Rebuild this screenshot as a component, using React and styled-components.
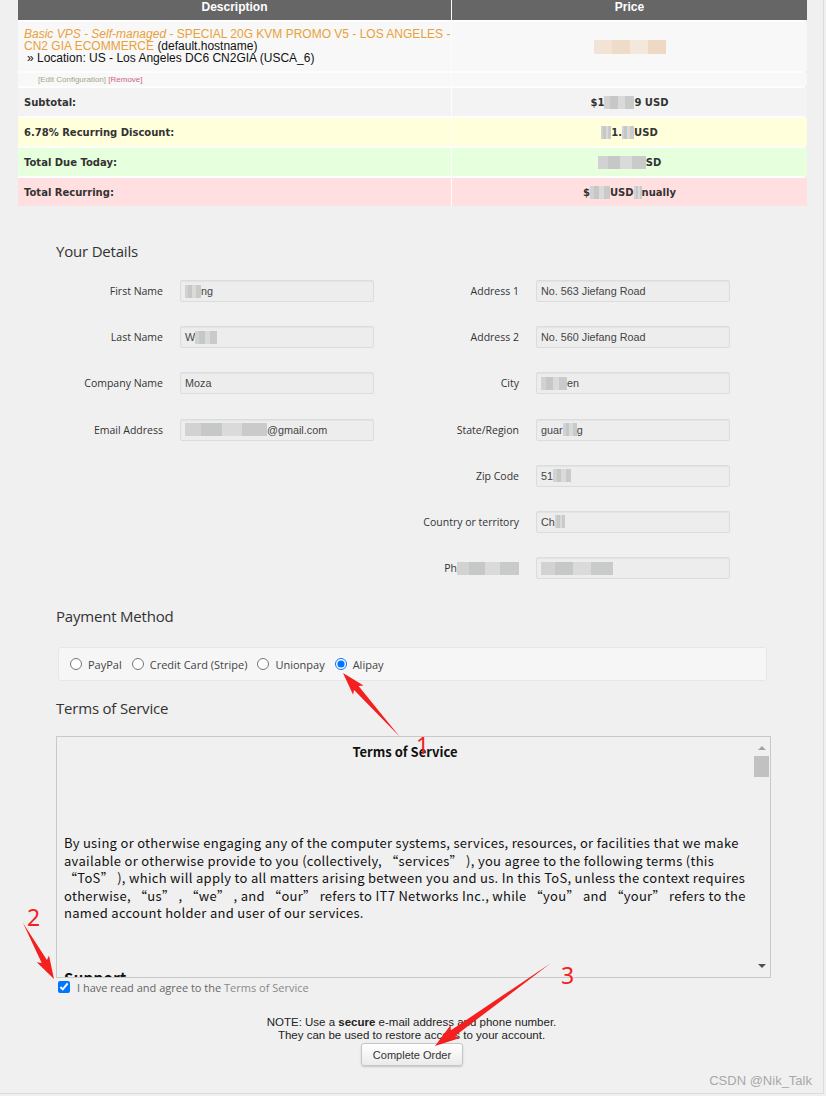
import React from "react";
import styled, { createGlobalStyle } from "styled-components";

const GlobalStyle = createGlobalStyle`
  html, body {
    margin: 0;
    padding: 0;
    background: #f0f0f0;
  }
`;

const Page = styled.div`
  position: relative;
  width: 823px;
  height: 1093px;
  border-right: 1px solid #dcdcdc;
  border-bottom: 1px solid #dcdcdc;
  font-family: "Liberation Sans", Arial, sans-serif;
  color: #333;
`;

/* ---------- cart table ---------- */

const Cart = styled.div`
  margin: 0 18px;
  display: grid;
  grid-template-columns: 433px 355px;
  column-gap: 1px;
  row-gap: 2px;
  background: #fdfdfd;
`;

const HeadCell = styled.div`
  height: 20px;
  background: #666;
  color: #fff;
  font-weight: bold;
  font-size: 12px;
  line-height: 14px;
  text-align: center;
`;

const tones = {
  plain: "#f8f8f8",
  sub: "#f3f3f3",
  yellow: "#ffffdc",
  green: "#e6ffdc",
  pink: "#ffdfdf",
};

const Cell = styled.div`
  background: ${(p) => tones[p.$tone || "plain"]};
  height: ${(p) => p.$h || 28}px;
  display: flex;
  align-items: center;
  justify-content: ${(p) => (p.$center ? "center" : "flex-start")};
  padding: 0 6px;
  box-sizing: border-box;
  font-family: "DejaVu Sans", Verdana, sans-serif;
  font-weight: bold;
  font-size: 10px;
  color: #333;
`;

const ProductCell = styled.div`
  background: #f8f8f8;
  height: 49px;
  padding: 6px 0 0 6px;
  box-sizing: border-box;
  font-size: 12px;
  line-height: 12px;
  color: #111;
`;

const Product = styled.span`
  color: #e8a13a;
`;

const Location = styled.div`
  padding-left: 3px;
`;

const EditCell = styled.div`
  background: #f8f8f8;
  height: 13px;
  padding-left: 20px;
  font-size: 8px;
  line-height: 13px;
  color: #a5a58a;
`;

const RemoveLink = styled.span`
  color: #d0677a;
`;

const Mask = styled.span`
  display: inline-block;
  width: ${(p) => p.$w}px;
  height: ${(p) => p.$h || 13}px;
  vertical-align: middle;
  background: ${(p) =>
    p.$peach
      ? "linear-gradient(90deg, #f1e4d6 0 25%, #efdcc8 25% 50%, #f4e8dc 50% 75%, #eedac4 75%)"
      : "linear-gradient(90deg, #d2d2d2 0 20%, #c6c8c8 20% 45%, #dadada 45% 70%, #c9cbcb 70%)"};
`;

/* ---------- sections ---------- */

const Main = styled.div`
  margin-left: 56px;
  width: 715px;
`;

const SectionTitle = styled.h2`
  margin: ${(p) => p.$top}px 0 0;
  font-family: "Open Sans", sans-serif;
  font-weight: normal;
  font-size: 15px;
  line-height: 20px;
  color: #333;
  letter-spacing: -0.2px;
`;

const FormGrid = styled.div`
  margin-top: 19px;
  display: flex;
  gap: 38px;
  align-items: flex-start;
`;

const FormCol = styled.div`
  display: flex;
  flex-direction: column;
  gap: 24.2px;
`;

const FormRow = styled.div`
  display: flex;
  align-items: center;
  gap: 17px;
`;

const Label = styled.div`
  width: 107px;
  text-align: right;
  font-family: "Open Sans", sans-serif;
  font-size: 10.5px;
  color: #333;
  white-space: nowrap;
`;

const Field = styled.div`
  width: 194px;
  height: 22px;
  box-sizing: border-box;
  border: 1px solid #dcdcdc;
  border-radius: 2px;
  background: #ededed;
  box-shadow: inset 0 1px 1px rgba(0, 0, 0, 0.04);
  padding: 0 4px;
  display: flex;
  align-items: center;
  font-size: 10.8px;
  color: #444;
  white-space: nowrap;
  overflow: hidden;
`;

const PayBox = styled.div`
  margin: 21px 0 0 2px;
  width: 709px;
  height: 34px;
  box-sizing: border-box;
  background: #f6f6f6;
  border: 1px solid #e6e6e6;
  border-radius: 3px;
  display: flex;
  align-items: center;
  gap: 10px;
  padding-left: 11px;
`;

const RadioLabel = styled.label`
  display: flex;
  align-items: center;
  font-family: "Open Sans", sans-serif;
  font-size: 11px;
  color: #444;

  input {
    margin: 0 6px 0 0;
    width: 12px;
    height: 12px;
  }
`;

const TosBox = styled.div`
  margin-top: 18px;
  width: 715px;
  height: 242px;
  box-sizing: border-box;
  border: 1px solid #c9c9c9;
  background: #f0f0f0;
  display: flex;
`;

const TosContent = styled.div`
  flex: 1;
  overflow: hidden;
  padding: 6px 0 0 7px;
  font-family: "Noto Sans CJK SC", "Open Sans", sans-serif;
  font-size: 13px;
  letter-spacing: 0.3px;
  color: #111;
`;

const TosTitle = styled.div`
  text-align: center;
  font-weight: bold;
  line-height: 18px;
  padding-right: 7px;
  letter-spacing: 0;
`;

const TosText = styled.p`
  margin: 73px 0 0;
  line-height: 17.5px;
  white-space: nowrap;
`;

const TosHeading = styled.div`
  margin-top: 46px;
  font-weight: bold;
  font-size: 15px;
  line-height: 20px;
`;

const Scrollbar = styled.div`
  width: 17px;
  display: flex;
  flex-direction: column;
  align-items: center;
  padding: 9px 0 9px;
  box-sizing: border-box;
`;

const Arrow = styled.div`
  width: 0;
  height: 0;
  border-left: 4px solid transparent;
  border-right: 4px solid transparent;
  ${(p) =>
    p.$down
      ? "border-top: 4px solid #505050;"
      : "border-bottom: 4px solid #a3a3a3;"}
`;

const Thumb = styled.div`
  margin-top: 6px;
  width: 15px;
  height: 21px;
  background: #c1c1c1;
`;

const Spacer = styled.div`
  flex: 1;
`;

const AgreeRow = styled.label`
  margin-top: 1px;
  height: 16px;
  display: flex;
  align-items: center;
  font-family: "Open Sans", sans-serif;
  font-size: 11px;
  color: #666;

  input {
    margin: 0 7px 0 2px;
    width: 12px;
    height: 12px;
  }
`;

const TosLink = styled.span`
  color: #8a8a8a;
`;

const Note = styled.div`
  margin-top: 21px;
  text-align: center;
  font-size: 11.5px;
  line-height: 13px;
  color: #222;
  margin-left: -56px;
  width: 823px;
`;

const Button = styled.button`
  display: block;
  margin: 1px 0 0 305px;
  width: 102px;
  height: 23px;
  background: linear-gradient(#ffffff, #ebebeb);
  border: 1px solid #c6c6c6;
  border-radius: 3px;
  box-shadow: 0 1px 2px rgba(0, 0, 0, 0.18);
  font-family: "Liberation Sans", Arial, sans-serif;
  font-size: 11px;
  color: #333;
  padding: 0;
`;

const Watermark = styled.div`
  position: absolute;
  right: 11px;
  top: 1073px;
  font-size: 13px;
  color: #a8a8a8;
`;

const Overlay = styled.svg`
  position: absolute;
  left: 0;
  top: 0;
  pointer-events: none;
`;

function arrowPoints(x1, y1, x2, y2, head = 20, headW = 8, shaftW = 3) {
  const dx = x2 - x1;
  const dy = y2 - y1;
  const L = Math.hypot(dx, dy);
  const ux = dx / L;
  const uy = dy / L;
  const nx = -uy;
  const ny = ux;
  const p = (a, b) => `${x1 + ux * a + nx * b},${y1 + uy * a + ny * b}`;
  return [
    p(0, 0),
    p(L - head, -shaftW),
    p(L - head - 3, -headW),
    p(L, 0),
    p(L - head - 3, headW),
    p(L - head, shaftW),
  ].join(" ");
}

const leftRows = [
  ["First Name", <><Mask $w={16} />ng</>],
  ["Last Name", <>W<Mask $w={22} /></>],
  ["Company Name", "Moza"],
  ["Email Address", <><Mask $w={82} />@gmail.com</>],
];

const rightRows = [
  ["Address 1", "No. 563 Jiefang Road"],
  ["Address 2", "No. 560 Jiefang Road"],
  ["City", <><Mask $w={26} />en</>],
  ["State/Region", <>guar<Mask $w={14} />g</>],
  ["Zip Code", <>51<Mask $w={18} /></>],
  ["Country or territory", <>Ch<Mask $w={10} /></>],
  [<>Ph<Mask $w={62} /></>, <Mask $w={72} />],
];

export default function App() {
  return (
    <>
      <GlobalStyle />
      <Page>
        <Cart>
          <HeadCell>Description</HeadCell>
          <HeadCell>Price</HeadCell>

          <ProductCell>
            <Product>
              <i>Basic VPS - Self-managed</i> - SPECIAL 20G KVM PROMO V5 - LOS ANGELES - CN2 GIA ECOMMERCE
            </Product>{" "}
            (default.hostname)
            <Location>» Location: US - Los Angeles DC6 CN2GIA (USCA_6)</Location>
          </ProductCell>
          <Cell $h={49} $center>
            <Mask $w={72} $h={14} $peach />
          </Cell>

          <EditCell>
            [Edit Configuration] <RemoveLink>[Remove]</RemoveLink>
          </EditCell>
          <EditCell />

          <Cell $tone="sub">Subtotal:</Cell>
          <Cell $tone="sub" $center>
            $1<Mask $w={30} />9 USD
          </Cell>

          <Cell $tone="yellow">6.78% Recurring Discount:</Cell>
          <Cell $tone="yellow" $center>
            <Mask $w={10} />1.<Mask $w={12} />USD
          </Cell>

          <Cell $tone="green">Total Due Today:</Cell>
          <Cell $tone="green" $center>
            <Mask $w={48} />SD
          </Cell>

          <Cell $tone="pink">Total Recurring:</Cell>
          <Cell $tone="pink" $center>
            $<Mask $w={20} />USD<Mask $w={8} />nually
          </Cell>
        </Cart>

        <Main>
          <SectionTitle $top={35}>Your Details</SectionTitle>
          <FormGrid>
            <FormCol>
              {leftRows.map(([label, value], i) => (
                <FormRow key={i}>
                  <Label>{label}</Label>
                  <Field>{value}</Field>
                </FormRow>
              ))}
            </FormCol>
            <FormCol>
              {rightRows.map(([label, value], i) => (
                <FormRow key={i}>
                  <Label>{label}</Label>
                  <Field>{value}</Field>
                </FormRow>
              ))}
            </FormCol>
          </FormGrid>

          <SectionTitle $top={27}>Payment Method</SectionTitle>
          <PayBox>
            <RadioLabel>
              <input type="radio" name="pay" readOnly /> PayPal
            </RadioLabel>
            <RadioLabel>
              <input type="radio" name="pay" readOnly /> Credit Card (Stripe)
            </RadioLabel>
            <RadioLabel>
              <input type="radio" name="pay" readOnly /> Unionpay
            </RadioLabel>
            <RadioLabel>
              <input type="radio" name="pay" checked readOnly /> Alipay
            </RadioLabel>
          </PayBox>

          <SectionTitle $top={17}>Terms of Service</SectionTitle>
          <TosBox>
            <TosContent>
              <TosTitle>Terms of Service</TosTitle>
              <TosText>
                By using or otherwise engaging any of the computer systems, services, resources, or facilities that we make
                <br />
                available or otherwise provide to you (collectively, “services” ), you agree to the following terms (this
                <br />
                “ToS” ), which will apply to all matters arising between you and us. In this ToS, unless the context requires
                <br />
                otherwise, “us” , “we” , and “our” refers to IT7 Networks Inc., while “you” and “your” refers to the
                <br />
                named account holder and user of our services.
              </TosText>
              <TosHeading>Support</TosHeading>
            </TosContent>
            <Scrollbar>
              <Arrow />
              <Thumb />
              <Spacer />
              <Arrow $down />
            </Scrollbar>
          </TosBox>

          <AgreeRow>
            <input type="checkbox" checked readOnly />I have read and agree to the&nbsp;<TosLink>Terms of Service</TosLink>
          </AgreeRow>

          <Note>
            NOTE: Use a <b>secure</b> e-mail address and phone number.
            <br />
            They can be used to restore access to your account.
          </Note>
          <Button>Complete Order</Button>
        </Main>

        <Watermark>CSDN @Nik_Talk</Watermark>

        <Overlay width="826" height="1096" viewBox="0 0 826 1096">
          <g fill="#f41f1f">
            <polygon points={arrowPoints(400, 737, 343, 673, 20, 7, 3)} />
            <polygon points={arrowPoints(23, 923, 54, 979, 20, 7, 3)} />
            <polygon points={arrowPoints(551, 963, 435, 1046, 22, 8, 3.5)} />
          </g>
          <g fill="#f41f1f" fontFamily="'Noto Sans', sans-serif" fontSize="23">
            <text x="416" y="754">1</text>
            <text x="27" y="926">2</text>
            <text x="561" y="984">3</text>
          </g>
        </Overlay>
      </Page>
    </>
  );
}
